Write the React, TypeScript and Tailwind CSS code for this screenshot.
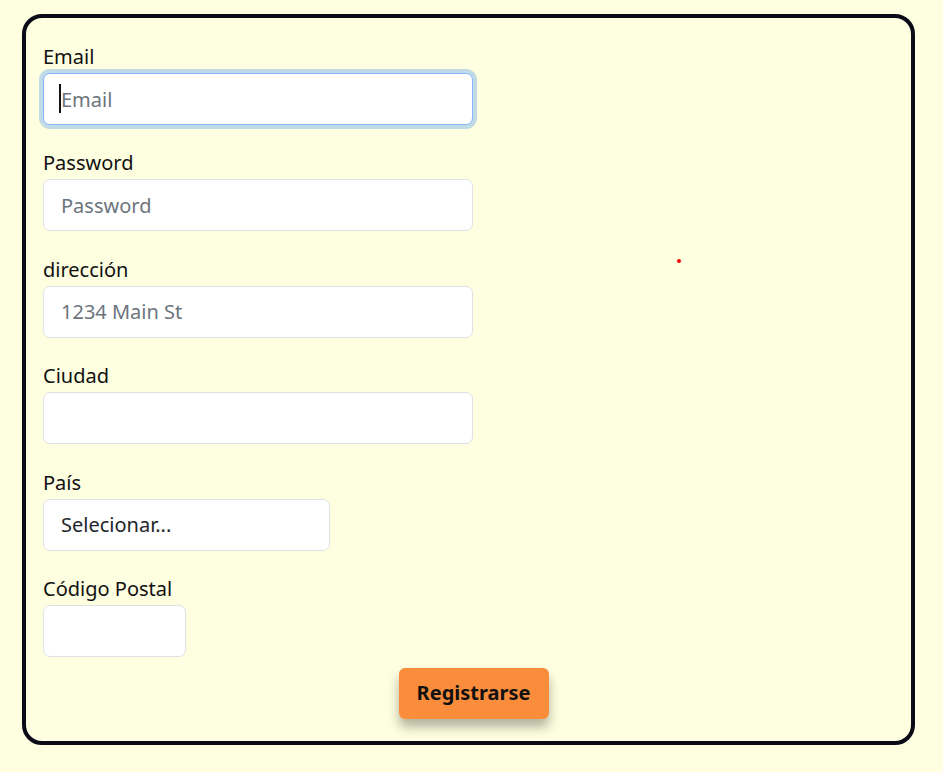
import React from "react";

const font = { fontFamily: '"Noto Sans", "Open Sans", sans-serif' };

function Field({ label, placeholder, w, focus }: { label: string; placeholder?: string; w: string; focus?: boolean }) {
  return (
    <div className="mb-[27.4px] flex flex-col">
      <label className="h-[27px] text-[20px] leading-[21px] text-[#111]">{label}</label>
      <div className={`relative ${w}`}>
        <input
          placeholder={placeholder}
          className={`h-[52px] w-full rounded-[7px] border bg-white px-[17px] text-[20px] text-[#212529] placeholder:text-[#6c757d] outline-none ${
            focus ? "border-[#86b7fe] shadow-[0_0_0_4px_#c0dbe6]" : "border-[#dee2e6]"
          }`}
        />
        {focus && <span className="absolute left-[16px] top-[11px] h-[29px] w-[2px] bg-[#111]" />}
      </div>
    </div>
  );
}

export default function App() {
  return (
    <div className="min-h-[772px] w-full bg-[#fefee0] pt-[14px] pl-[22px]" style={font}>
      <div className="relative h-[731px] w-[893px] rounded-[20px] border-[4px] border-[#0b0b18] pl-[17px] pt-[28px]">
        <Field label="Email" placeholder="Email" w="w-[430px]" focus />
        <Field label="Password" placeholder="Password" w="w-[430px]" />
        <Field label="dirección" placeholder="1234 Main St" w="w-[430px]" />
        <Field label="Ciudad" w="w-[430px]" />
        <div className="mb-[27.4px] flex flex-col">
          <label className="h-[27px] text-[20px] leading-[21px] text-[#111]">País</label>
          <div className="flex h-[52px] w-[287px] items-center rounded-[7px] border border-[#dee2e6] bg-white px-[17px] text-[20px] text-[#212529]">
            Selecionar...
          </div>
        </div>
        <div className="flex flex-col">
          <label className="h-[27px] text-[20px] leading-[21px] text-[#111]">Código Postal</label>
          <input className="h-[52px] w-[143px] rounded-[7px] border border-[#dee2e6] bg-white outline-none" />
        </div>
        <div className="flex justify-center pt-[11px] pr-[17px]">
          <button className="ml-[10px] h-[51px] w-[150px] rounded-[6px] bg-[#f98d3c] text-[20px] font-bold text-[#111] shadow-[0_8px_12px_rgba(0,0,0,0.3)]">
            Registrarse
          </button>
        </div>
        <span className="absolute left-[651px] top-[241px] h-[4px] w-[4px] rounded-full bg-[#f00]" />
      </div>
    </div>
  );
}
